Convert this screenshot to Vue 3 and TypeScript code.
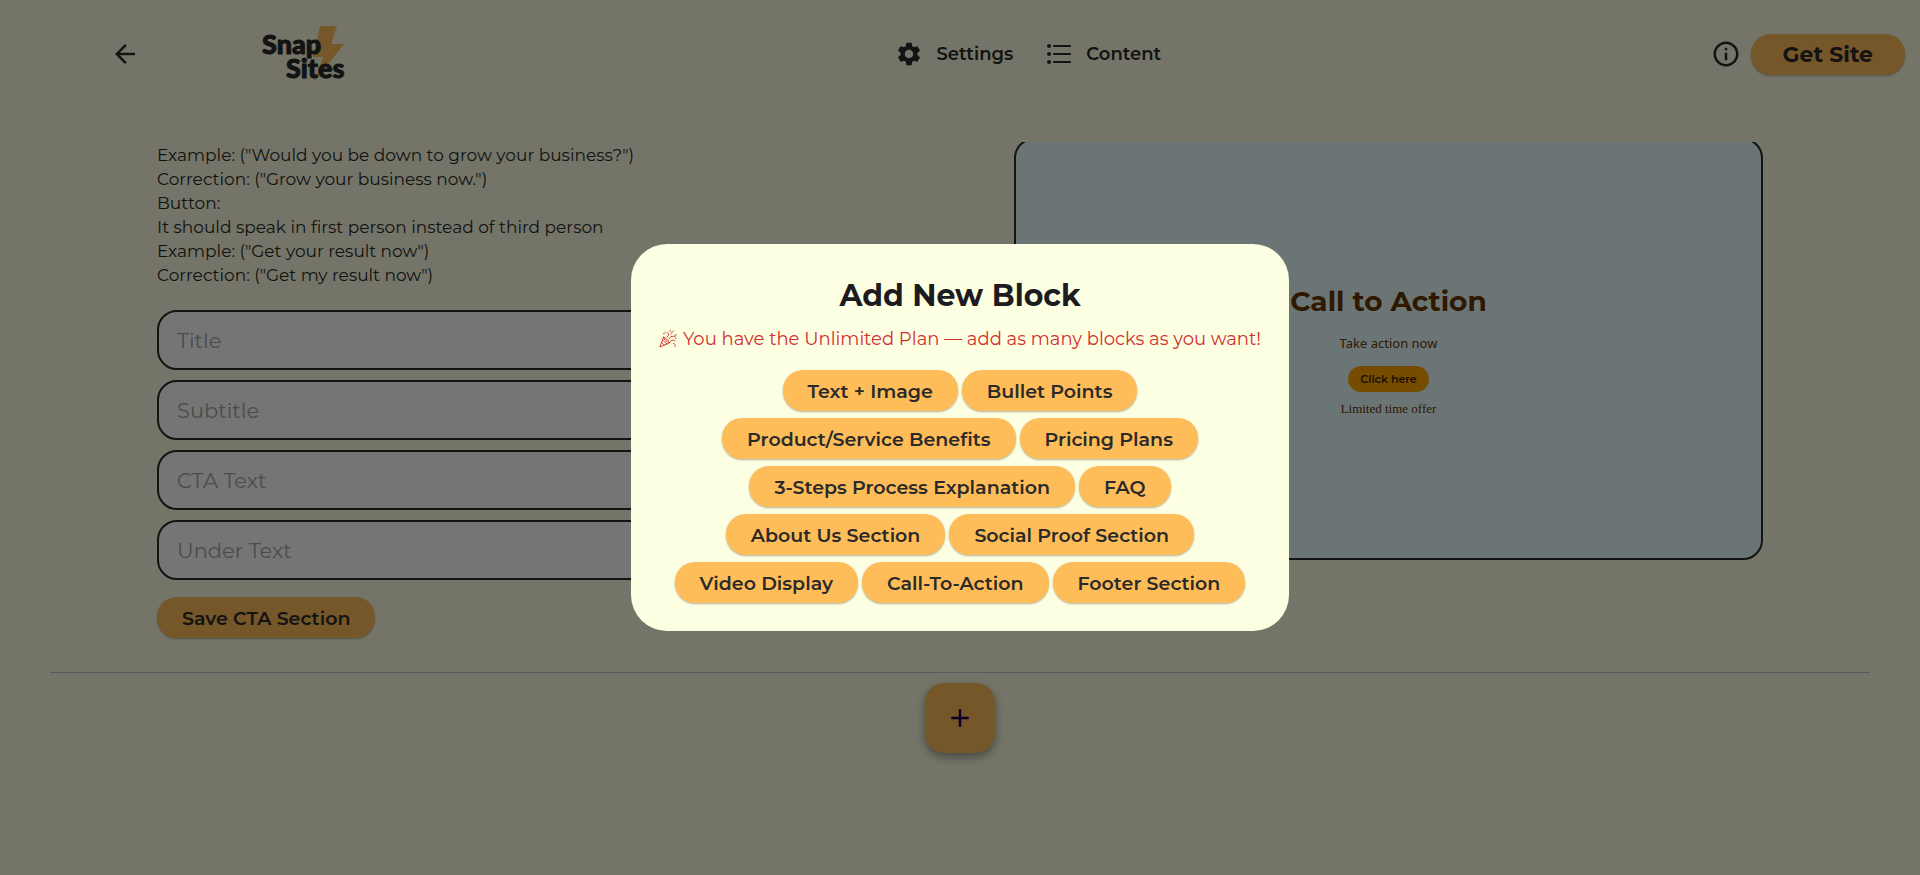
<script setup lang="ts">
import { ref } from 'vue'

interface Field {
  id: string
  label: string
}

const guidance: string[] = [
  'Example: ("Would you be down to grow your business?")',
  'Correction: ("Grow your business now.")',
  'Button:',
  'It should speak in first person instead of third person',
  'Example: ("Get your result now")',
  'Correction: ("Get my result now")',
]

const fields: Field[] = [
  { id: 'title', label: 'Title' },
  { id: 'subtitle', label: 'Subtitle' },
  { id: 'cta-text', label: 'CTA Text' },
  { id: 'under-text', label: 'Under Text' },
]

const values = ref<Record<string, string>>({
  title: '',
  subtitle: '',
  'cta-text': '',
  'under-text': '',
})

const blockRows: string[][] = [
  ['Text + Image', 'Bullet Points'],
  ['Product/Service Benefits', 'Pricing Plans'],
  ['3-Steps Process Explanation', 'FAQ'],
  ['About Us Section', 'Social Proof Section'],
  ['Video Display', 'Call-To-Action', 'Footer Section'],
]
</script>

<template>
  <div class="page">
    <header class="topbar">
      <div class="brand">
        <button class="icon-button" type="button" aria-label="Back">
          <svg width="30" height="30" viewBox="0 0 24 24" fill="currentColor">
            <path d="M20 11H7.83l5.59-5.59L12 4l-8 8 8 8 1.41-1.41L7.83 13H20z" />
          </svg>
        </button>
        <svg class="logo" width="84" height="60" viewBox="0 0 84 60" role="img" aria-label="Snap Sites">
          <path class="bolt" d="M58 2H75L69 20H82L52 58L61 33H51Z" />
          <text class="logo-text" x="0" y="30">Snap</text>
          <text class="logo-text" x="24" y="54">Sites</text>
        </svg>
      </div>
      <nav class="menu">
        <a class="menu-link" href="#settings">
          <svg width="28" height="28" viewBox="0 0 24 24" fill="currentColor">
            <path d="M19.14 12.94c.04-.3.06-.61.06-.94 0-.32-.02-.64-.07-.94l2.03-1.58c.18-.14.23-.41.12-.61l-1.92-3.32c-.12-.22-.37-.29-.59-.22l-2.39.96c-.5-.38-1.03-.7-1.62-.94l-.36-2.54c-.04-.24-.24-.41-.48-.41h-3.84c-.24 0-.43.17-.47.41l-.36 2.54c-.59.24-1.13.57-1.62.94l-2.39-.96c-.22-.08-.47 0-.59.22L2.74 8.87c-.12.21-.08.47.12.61l2.03 1.58c-.05.3-.09.63-.09.94s.02.64.07.94l-2.03 1.58c-.18.14-.23.41-.12.61l1.92 3.32c.12.22.37.29.59.22l2.39-.96c.5.38 1.03.7 1.62.94l.36 2.54c.05.24.24.41.48.41h3.84c.24 0 .44-.17.47-.41l.36-2.54c.59-.24 1.13-.56 1.62-.94l2.39.96c.22.08.47 0 .59-.22l1.92-3.32c.12-.22.07-.47-.12-.61l-2.01-1.58zM12 15.6c-1.98 0-3.6-1.62-3.6-3.6s1.62-3.6 3.6-3.6 3.6 1.62 3.6 3.6-1.62 3.6-3.6 3.6z" />
          </svg>
          <span>Settings</span>
        </a>
        <a class="menu-link" href="#content">
          <svg width="28" height="28" viewBox="0 0 28 28" fill="currentColor">
            <circle cx="4" cy="6" r="2" />
            <circle cx="4" cy="14" r="2" />
            <circle cx="4" cy="22" r="2" />
            <path d="M9 5h16q1 0 1 1t-1 1H9q-1 0-1-1t1-1zM9 13h16q1 0 1 1t-1 1H9q-1 0-1-1t1-1zM9 21h16q1 0 1 1t-1 1H9q-1 0-1-1t1-1z" />
          </svg>
          <span>Content</span>
        </a>
      </nav>
      <div class="actions">
        <button class="icon-button" type="button" aria-label="Information">
          <svg width="30" height="30" viewBox="0 0 24 24" fill="currentColor">
            <path d="M11 7h2v2h-2zm0 4h2v6h-2zm1-9C6.48 2 2 6.48 2 12s4.48 10 10 10 10-4.48 10-10S17.52 2 12 2zm0 18c-4.41 0-8-3.59-8-8s3.590-8 8-8 8 3.590 8 8-3.590 8-8 8z" />
          </svg>
        </button>
        <button class="pill pill-large" type="button">Get Site</button>
      </div>
    </header>

    <main>
      <div class="editor">
        <form class="form" @submit.prevent>
          <p class="guidance">
            <span v-for="line in guidance" :key="line">{{ line }}</span>
          </p>
          <div class="fields">
            <input
              v-for="field in fields"
              :id="field.id"
              :key="field.id"
              v-model="values[field.id]"
              class="field"
              type="text"
              :placeholder="field.label"
              :aria-label="field.label"
            />
          </div>
          <button class="pill" type="submit">Save CTA Section</button>
        </form>
        <div class="preview-window">
          <section class="preview">
            <h2 class="preview-title">Call to Action</h2>
            <p class="preview-subtitle">Take action now</p>
            <button class="preview-button" type="button">Click here</button>
            <p class="preview-note">Limited time offer</p>
          </section>
        </div>
      </div>
      <div class="add-area">
        <button class="fab" type="button" aria-label="Add block">
          <svg width="30" height="30" viewBox="0 0 24 24" fill="currentColor">
            <path d="M19 13h-6v6h-2v-6H5v-2h6V5h2v6h6z" />
          </svg>
        </button>
      </div>
    </main>

    <div class="overlay">
      <section class="dialog" role="dialog" aria-modal="true" aria-labelledby="dialog-title">
        <h1 id="dialog-title" class="dialog-title">Add New Block</h1>
        <p class="plan">
          <svg width="18" height="20" viewBox="0 0 20 20" fill="none" stroke="currentColor" stroke-linecap="round" stroke-linejoin="round">
            <path d="M5 8L1 19L12 14M5 8q1 5 7 6M5 8q4 1 7 6M4 11l5 5M3 14l3 3M9 8q3-2 1-5M11 10q2-4 5-3t3-2M13 12q3-2 5 0M8 3l-1-1M14 3l2-2M13 5l1-1M5 4h1M18 9h1M16 15l2 1M12 1h1M17 18h1" />
          </svg>
          <span>You have the Unlimited Plan — add as many blocks as you want!</span>
        </p>
        <div class="block-list">
          <div v-for="(row, index) in blockRows" :key="index" class="block-row">
            <button v-for="name in row" :key="name" class="pill" type="button">{{ name }}</button>
          </div>
        </div>
      </section>
    </div>
  </div>
</template>

<style>
body {
  margin: 0;
  background: #fdffe3;
}
</style>

<style scoped>
.page {
  min-height: 100vh;
  background: #fdffe3;
  color: #2a2a2a;
  font-family: Montserrat, Inter, sans-serif;
}

.page * {
  box-sizing: border-box;
}

button,
input {
  font-family: inherit;
}

.topbar {
  display: flex;
  align-items: center;
  justify-content: space-between;
  height: 108px;
  padding: 0 15px 0 110px;
}

.brand {
  display: flex;
  align-items: center;
  gap: 122px;
}

.logo {
  display: block;
}

.logo-text {
  font-family: Lato, sans-serif;
  font-size: 27px;
  font-weight: 900;
  fill: #2a2a2a;
  stroke: #2a2a2a;
  stroke-width: 1px;
}

.bolt {
  fill: #ffbd59;
}

.icon-button {
  display: flex;
  padding: 0;
  border: 0;
  background: none;
  color: #2a2a2a;
}

.menu {
  display: flex;
  gap: 32px;
}

.menu-link {
  display: flex;
  align-items: center;
  gap: 13px;
  color: #2a2a2a;
  font-size: 18px;
  font-weight: 600;
  line-height: 28px;
  text-decoration: none;
}

.actions {
  display: flex;
  align-items: center;
  gap: 10px;
}

.pill {
  height: 41px;
  padding: 1px 25px 0;
  border: 0;
  border-radius: 20px;
  background: #ffbd59;
  box-shadow: 0 1px 2px rgba(0, 0, 0, 0.3);
  color: #2a2a2a;
  font-size: 19px;
  font-weight: 600;
  white-space: nowrap;
}

.pill-large {
  padding: 0 32px;
  font-size: 22px;
  font-weight: 700;
}

.editor {
  display: grid;
  grid-template-columns: 1fr 1fr;
  gap: 108px;
  margin: 0 50px;
  padding: 34px 107px;
  border-bottom: 1px solid #cac4d0;
}

.form {
  display: flex;
  flex-direction: column;
  align-items: flex-start;
  padding-top: 1px;
}

.guidance {
  display: flex;
  flex-direction: column;
  margin: 0 0 23px;
  font-size: 17px;
  line-height: 24px;
}

.fields {
  display: flex;
  flex-direction: column;
  gap: 10px;
  width: 100%;
  margin-bottom: 17px;
}

.field {
  width: 100%;
  height: 60px;
  padding: 0 18px;
  border: 2px solid #2a2a2a;
  border-radius: 20px;
  background: #fff;
  color: #2a2a2a;
  font-size: 21px;
  font-weight: 400;
}

.field::placeholder {
  color: #a6a6a6;
  opacity: 1;
}

.preview-window {
  display: flex;
  align-items: flex-end;
  align-self: start;
  height: 418px;
  overflow: hidden;
}

.preview {
  display: flex;
  flex: 1;
  flex-direction: column;
  align-items: center;
  justify-content: center;
  height: 422px;
  padding-top: 4px;
  border: 2px solid #2a2a2a;
  border-radius: 20px;
  background: #ebfeff;
  color: #663800;
}

.preview-title {
  margin: 0 0 16px;
  font-size: 28px;
  font-weight: 700;
  line-height: 34px;
}

.preview-subtitle {
  margin: 0 0 14px;
  font-family: "Noto Sans", sans-serif;
  font-size: 13px;
  line-height: 18px;
}

.preview-button {
  height: 26px;
  margin-bottom: 8px;
  padding: 0 12px;
  border: 0;
  border-radius: 13px;
  background: #ffa500;
  color: #402300;
  font-size: 11px;
  font-weight: 600;
}

.preview-note {
  margin: 0;
  font-family: "Liberation Serif", serif;
  font-size: 13px;
  line-height: 18px;
}

.add-area {
  display: flex;
  justify-content: center;
  padding: 10px;
}

.fab {
  display: flex;
  align-items: center;
  justify-content: center;
  width: 70px;
  height: 70px;
  padding: 0;
  border: 0;
  border-radius: 20px;
  background: #ffbd59;
  box-shadow: 0 4px 10px rgba(0, 0, 0, 0.4);
  color: #21005d;
}

.overlay {
  position: fixed;
  inset: 0;
  display: flex;
  align-items: center;
  justify-content: center;
  background: rgba(0, 0, 0, 0.54);
}

.dialog {
  padding: 31px 28px 28px;
  border-radius: 36px;
  background: #fdffe3;
}

.dialog-title {
  margin: 0 0 12px;
  color: #1d1b20;
  font-size: 30px;
  font-weight: 700;
  line-height: 42px;
  text-align: center;
}

.plan {
  display: flex;
  align-items: center;
  justify-content: center;
  gap: 6px;
  margin: 0 0 21px;
  color: #d32f2f;
  font-size: 18px;
  line-height: 20px;
}

.block-list {
  display: flex;
  flex-direction: column;
  gap: 7px;
}

.block-row {
  display: flex;
  justify-content: center;
  gap: 4px;
}
</style>
